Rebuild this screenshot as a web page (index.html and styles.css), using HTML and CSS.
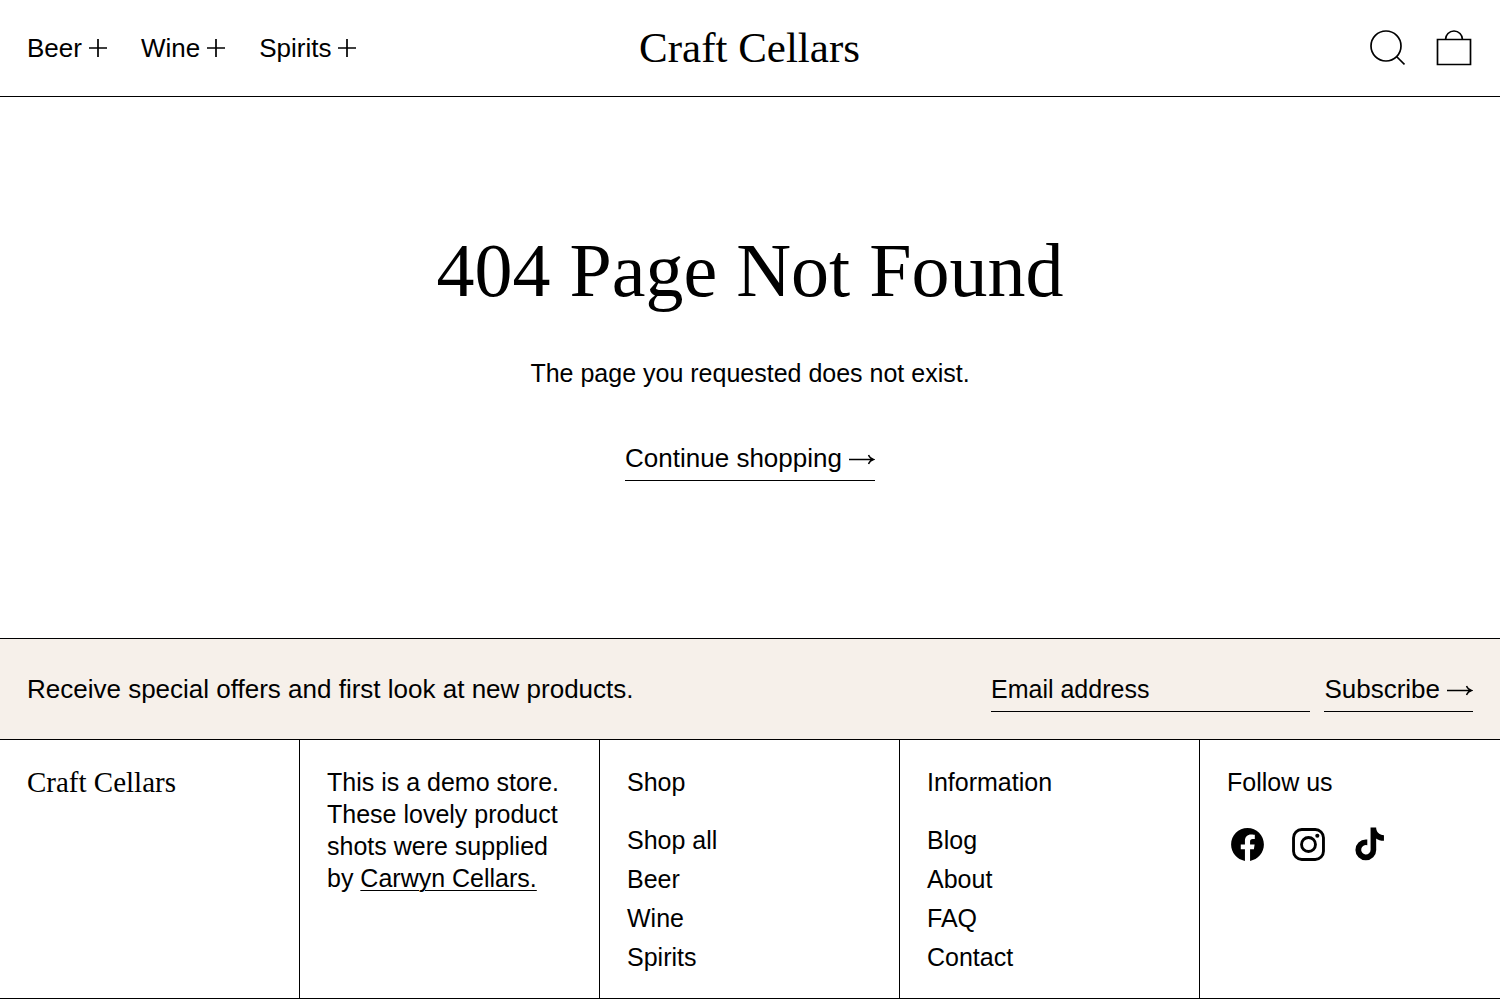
FILE: index.html
```html
<!DOCTYPE html>
<html lang="en">
<head>
  <meta charset="UTF-8">
  <meta name="viewport" content="width=device-width, initial-scale=1.0">
  <title>404 Page Not Found - Craft Cellars</title>
  <link rel="stylesheet" href="styles.css">
</head>
<body>
  <header class="header">
    <nav class="nav">
      <button type="button" class="nav-item">Beer
        <svg class="plus" viewBox="0 0 20 20" aria-hidden="true"><path d="M10 1v18M1 10h18"/></svg>
      </button>
      <button type="button" class="nav-item">Wine
        <svg class="plus" viewBox="0 0 20 20" aria-hidden="true"><path d="M10 1v18M1 10h18"/></svg>
      </button>
      <button type="button" class="nav-item">Spirits
        <svg class="plus" viewBox="0 0 20 20" aria-hidden="true"><path d="M10 1v18M1 10h18"/></svg>
      </button>
    </nav>
    <a href="#" class="logo">Craft Cellars</a>
    <div class="header-icons">
      <a href="#" aria-label="Search">
        <svg class="icon" viewBox="0 0 36 36"><circle cx="17" cy="16" r="15"/><path d="M27.500 26.500l8 8"/></svg>
      </a>
      <a href="#" aria-label="Cart">
        <svg class="icon" viewBox="0 0 36 36"><path d="M1.500 9.500h33v25h-33zM9.500 9.500a8.500 8.500 0 0 1 17 0"/></svg>
      </a>
    </div>
  </header>

  <main class="not-found">
    <h1>404 Page Not Found</h1>
    <p>The page you requested does not exist.</p>
    <a href="#" class="line-link">Continue shopping
      <svg class="arrow" viewBox="0 0 26 14" aria-hidden="true"><path d="M0 8.500h24M19.500 4c.8 2 2.300 3.700 5 4.500-2.700.8-4.200 2.500-5 4.500"/></svg>
    </a>
  </main>

  <section class="newsletter">
    <p>Receive special offers and first look at new products.</p>
    <form class="newsletter-form">
      <input type="email" placeholder="Email address" aria-label="Email address">
      <button type="submit" class="line-link">Subscribe
        <svg class="arrow" viewBox="0 0 26 14" aria-hidden="true"><path d="M0 8.500h24M19.500 4c.8 2 2.300 3.700 5 4.500-2.700.8-4.200 2.500-5 4.500"/></svg>
      </button>
    </form>
  </section>

  <footer class="footer">
    <div class="footer-col">
      <a href="#" class="logo logo-small">Craft Cellars</a>
    </div>
    <div class="footer-col">
      <p>This is a demo store. These lovely product shots were supplied by <a href="#" class="text-link">Carwyn Cellars.</a></p>
    </div>
    <div class="footer-col">
      <h2>Shop</h2>
      <ul>
        <li><a href="#">Shop all</a></li>
        <li><a href="#">Beer</a></li>
        <li><a href="#">Wine</a></li>
        <li><a href="#">Spirits</a></li>
      </ul>
    </div>
    <div class="footer-col">
      <h2>Information</h2>
      <ul>
        <li><a href="#">Blog</a></li>
        <li><a href="#">About</a></li>
        <li><a href="#">FAQ</a></li>
        <li><a href="#">Contact</a></li>
      </ul>
    </div>
    <div class="footer-col">
      <h2>Follow us</h2>
      <div class="social">
        <a href="#" aria-label="Facebook">
          <svg viewBox="0 0 20 20"><path d="M18 10.049C18 5.603 14.419 2 10 2c-4.419 0-8 3.603-8 8.049C2 14.067 4.925 17.396 8.750 18v-5.624H6.719v-2.328h2.030V8.275c0-2.017 1.195-3.132 3.023-3.132.874 0 1.790.158 1.790.158v1.980h-1.009c-.994 0-1.303.621-1.303 1.258v1.510h2.219l-.355 2.326H11.250V18c3.825-.604 6.750-3.933 6.750-7.951Z"/></svg>
        </a>
        <a href="#" aria-label="Instagram">
          <svg class="instagram" viewBox="0 0 20 20"><rect x="2.700" y="2.700" width="14.600" height="14.600" rx="4"/><circle cx="10" cy="10" r="3.400"/><circle class="dot" cx="14.300" cy="5.700" r="1"/></svg>
        </a>
        <a href="#" aria-label="TikTok">
          <svg viewBox="0 0 20 20"><path d="M10.511 1.705h2.740s-.157 3.510 3.795 3.768v2.711s-2.114.129-3.796-1.158l.028 5.606A5.073 5.073 0 1 1 8.213 7.560h.708v2.785a2.298 2.298 0 1 0 1.618 2.205L10.510 1.705z"/></svg>
        </a>
      </div>
    </div>
  </footer>
</body>
</html>
```

FILE: styles.css
```css
* {
  box-sizing: border-box;
}

body {
  margin: 0;
  background-color: #fff;
  color: #000;
  font-family: "Liberation Sans", Arial, sans-serif;
  font-size: 25px;
  line-height: 32px;
}

h1, h2, p, ul {
  margin: 0;
  padding: 0;
  font-weight: normal;
}

a {
  color: inherit;
  text-decoration: none;
}

button, input {
  font: inherit;
  color: inherit;
  background: none;
  border: none;
  border-radius: 0;
  padding: 0;
}

button {
  cursor: pointer;
}

svg {
  display: block;
}

.header {
  display: grid;
  grid-template-columns: 1fr auto 1fr;
  align-items: center;
  padding: 24px 28px 24px 27px;
  border-bottom: 1px solid #000;
}

.nav {
  display: flex;
  gap: 33px;
}

.nav-item {
  display: flex;
  align-items: center;
  gap: 6px;
  font-size: 26px;
}

.plus {
  width: 20px;
  height: 20px;
  fill: none;
  stroke: #000;
  stroke-width: 1.7;
}

.logo {
  font-family: "Liberation Serif", "Times New Roman", serif;
  font-size: 43px;
  line-height: 48px;
}

.logo-small {
  display: block;
  font-size: 29px;
  line-height: 32px;
}

.header-icons {
  display: flex;
  justify-content: flex-end;
  gap: 31px;
}

.icon {
  width: 36px;
  height: 36px;
  fill: none;
  stroke: #000;
  stroke-width: 1.7;
}

.not-found {
  display: flex;
  flex-direction: column;
  align-items: center;
  padding: 133px 27px 157px;
  text-align: center;
}

.not-found h1 {
  margin-bottom: 47px;
  font-family: "Liberation Serif", "Times New Roman", serif;
  font-size: 76px;
  line-height: 80px;
}

.not-found p {
  margin-bottom: 53px;
}

.line-link {
  display: flex;
  align-items: center;
  gap: 7px;
  padding-bottom: 6px;
  border-bottom: 1px solid #000;
  font-size: 26px;
  white-space: nowrap;
}

.arrow {
  width: 26px;
  height: 14px;
  fill: none;
  stroke: #000;
  stroke-width: 1.4;
}

.newsletter {
  display: grid;
  grid-template-columns: minmax(0, 2fr) minmax(0, 1fr);
  padding: 34px 27px 27px;
  background-color: #f6f0ea;
  border-top: 1px solid #000;
  border-bottom: 1px solid #000;
}

.newsletter p {
  font-size: 26px;
}

.newsletter-form {
  display: flex;
  gap: 14px;
}

.newsletter-form input {
  flex: 1;
  min-width: 0;
  height: 39px;
  padding-bottom: 6px;
  border-bottom: 1px solid #000;
}

.newsletter-form input::placeholder {
  color: #000;
  opacity: 1;
}

.footer {
  display: grid;
  grid-template-columns: repeat(5, 1fr);
  border-bottom: 1px solid #000;
}

.footer-col {
  padding: 26px 27px 25px;
  border-right: 1px solid #000;
}

.footer-col:last-child {
  border-right: none;
}

.text-link {
  text-decoration: underline;
  text-decoration-thickness: 1px;
  text-underline-offset: 3px;
}

.footer-col h2 {
  margin-bottom: 26px;
  font-size: 25px;
}

.footer-col ul {
  display: flex;
  flex-direction: column;
  gap: 7px;
  list-style: none;
}

.social {
  display: flex;
  gap: 20px;
}

.social svg {
  width: 41px;
  height: 41px;
}

.instagram {
  fill: none;
  stroke: #000;
  stroke-width: 1.4;
}

.instagram .dot {
  fill: #000;
  stroke: none;
}
```
